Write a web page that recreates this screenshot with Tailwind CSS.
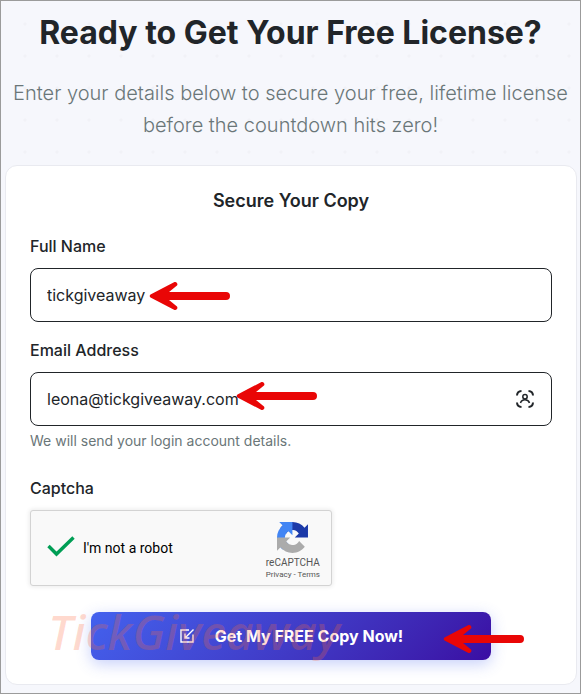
<!DOCTYPE html>
<html lang="en">
<head>
    <meta charset="UTF-8">
    <meta name="viewport" content="width=device-width, initial-scale=1.0">
    <script src="https://cdn.jsdelivr.net/npm/@tailwindcss/browser@4"></script>
    <title>Get Your Free License</title>
</head>
<body class="min-h-screen flex flex-col border border-[#9b9b9b] bg-[#f6f7fc] bg-[radial-gradient(circle,#f1f2f7_1px,transparent_2px)] bg-[size:32px_32px] bg-[position:9px_8px] font-['Inter',sans-serif] text-[#212529]">
    <!--arrow shared by the annotations-->
    <svg class="hidden" aria-hidden="true">
        <symbol id="arrow" viewBox="0 0 82 30">
            <path d="M20 11H77a4 4 0 0 1 0 8H20L28 25.500a2.300 2.300 0 0 1-2.500 3.500L1.500 16.500a1.800 1.800 0 0 1 0-3L25.500 1a2.300 2.300 0 0 1 2.500 3.500Z" fill="#e90606"/>
        </symbol>
    </svg>

    <header class="pt-3 px-1 text-center">
        <h1 class="text-[32px] leading-10 font-bold">Ready to Get Your Free License?</h1>
        <p class="mt-6 text-xl leading-8 font-light text-[#6a7678]">Enter your details below to secure your free, lifetime license before the countdown hits zero!</p>
    </header>

    <!--form card-->
    <main class="mt-6 ml-1 mr-[3px] rounded-xl border border-[#e9eaf0] bg-white p-6">
        <form class="flex flex-col">
            <h2 class="text-lg leading-[22px] font-semibold text-center">Secure Your Copy</h2>

            <label for="name" class="mt-[22px] leading-6 font-medium">Full Name</label>
            <div class="relative mt-[10px]">
                <input type="text" id="name" value="tickgiveaway" autocomplete="off" class="block w-full h-[54px] rounded-lg border border-[#212529] bg-white px-4">
                <svg class="absolute left-[119px] top-[13px] w-[82px] h-[30px]" aria-hidden="true"><use href="#arrow"/></svg>
            </div>

            <label for="email" class="mt-4 leading-6 font-medium">Email Address</label>
            <div class="relative mt-[10px]">
                <input type="email" id="email" value="leona@tickgiveaway.com" autocomplete="off" class="block w-full h-[54px] rounded-lg border border-[#212529] bg-white pl-4 pr-12">
                <svg class="absolute right-[18px] top-[18px] size-[18px]" viewBox="0 0 18 18" fill="none" stroke="#212529" stroke-width="2" aria-hidden="true">
                    <path d="M1 5.500Q1.200 1.200 5.500 1M12.500 1Q16.800 1.200 17 5.500M17 12.500Q16.800 16.800 12.500 17M5.500 17Q1.200 16.800 1 12.500"/>
                    <circle cx="9" cy="6.800" r="2.200" stroke-width="1.500"/>
                    <path d="M4.500 13Q5.500 9.800 9 9.800T13.500 13" stroke-width="1.500"/>
                </svg>
                <svg class="absolute left-[206px] top-[9px] w-[82px] h-[30px]" aria-hidden="true"><use href="#arrow"/></svg>
            </div>
            <p class="mt-[5px] text-sm leading-5 text-[#6a7678]">We will send your login account details.</p>

            <label for="robot" class="mt-[25px] leading-6 font-medium">Captcha</label>
            <div class="mt-[10px] w-[302px] h-[76px] flex items-center justify-between rounded-[3px] border border-[#d3d3d3] bg-[#f9f9f9] pl-4 pr-[11px] shadow-[0_0_4px_1px_rgba(0,0,0,0.08)] font-['Roboto',sans-serif]">
                <div class="flex items-center gap-2">
                    <div class="relative w-7 h-6">
                        <input type="checkbox" id="robot" checked class="appearance-none block size-full">
                        <svg class="absolute inset-0 size-full pointer-events-none" viewBox="0 0 28 24" fill="none" stroke="#009e55" stroke-width="3.400" aria-hidden="true"><path d="M1.500 10L9.500 18L26.500 1.500"/></svg>
                    </div>
                    <label for="robot" class="text-sm text-black">I'm not a robot</label>
                </div>
                <div class="flex flex-col items-center pt-[7px] text-[#555]">
                    <svg class="size-[31px]" viewBox="0 0 64 64" aria-hidden="true">
                        <path fill="#1c3aa9" d="M64 31.955l-.033-1.370V4.687l-7.160 7.160C50.948 4.674 42.033.093 32.050.093c-10.400 0-19.622 4.960-25.458 12.640l11.736 11.860a15.550 15.550 0 0 1 4.754-5.334c2.050-1.600 4.952-2.906 8.968-2.906.485 0 .860.057 1.135.163 4.976.393 9.288 3.140 11.828 7.124l-8.307 8.307 27.295.008"/>
                        <path fill="#4285f4" d="M31.862.094l-1.370.033H4.594l7.160 7.160C4.580 13.147 0 22.060 0 32.046c0 10.400 4.960 19.622 12.640 25.458L24.500 45.768a15.550 15.550 0 0 1-5.334-4.754c-1.600-2.050-2.906-4.952-2.906-8.968 0-.485.057-.860.163-1.135.393-4.976 3.140-9.288 7.124-11.828l8.307 8.307.008-27.295"/>
                        <path fill="#ababab" d="M.001 32.045l.033 1.370v25.898l7.160-7.160c5.860 7.173 14.774 11.754 24.760 11.754 10.400 0 19.622-4.960 25.458-12.640l-11.736-11.860a15.550 15.550 0 0 1-4.754 5.334c-2.050 1.600-4.952 2.906-8.968 2.906-.485 0-.860-.057-1.135-.163-4.976-.393-9.288-3.140-11.828-7.124l8.307-8.307-27.295-.008"/>
                    </svg>
                    <span class="mt-1 text-[10px] leading-3 whitespace-nowrap">reCAPTCHA</span>
                    <span class="text-[8px] leading-3 whitespace-nowrap"><a href="#">Privacy</a> - <a href="#">Terms</a></span>
                </div>
            </div>

            <div class="relative mt-[26px] self-center w-[400px] max-w-full">
                <button type="submit" class="w-full h-12 flex items-center justify-center gap-5 rounded-lg bg-linear-135 from-[#4361ee] to-[#3a0ca3] text-white font-bold shadow-[0_4px_15px_rgba(67,97,238,0.3)]">
                    <svg class="size-4" viewBox="0 0 16 16" fill="none" stroke="currentColor" stroke-width="1.400" aria-hidden="true"><path d="M10 2H2V14H14V6.500M14.500 1.500L6 10M6 5.500V10H10.500"/></svg>
                    Get My FREE Copy Now!
                </button>
                <span class="absolute -left-[43px] -top-2 text-[48px] leading-14 font-medium whitespace-nowrap pointer-events-none font-['Noto_Sans',sans-serif] italic text-[#ff6a3d]/25" aria-hidden="true">TickGiveaway</span>
                <svg class="absolute left-[352px] top-[12px] w-[82px] h-[30px]" aria-hidden="true"><use href="#arrow"/></svg>
            </div>
        </form>
    </main>
</body>
</html>
